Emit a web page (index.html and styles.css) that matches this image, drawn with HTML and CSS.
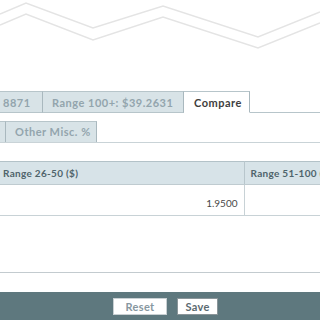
FILE: index.html
```html
<!DOCTYPE html>
<html lang="en">
<head>
    <meta charset="UTF-8">
    <link rel="stylesheet" href="styles.css">
    <title>Pricing ranges</title>
</head>
<body>
    <div class="banner">
        <svg width="320" height="60" viewBox="0 0 320 60">
            <polyline points="0,14 26,3 93,28 163,6 258,37 320,12" fill="none" stroke="#e4e4e4" stroke-width="1.5"/>
            <polyline points="0,25 26,14 93,40 163,17 258,48 320,23" fill="none" stroke="#e4e4e4" stroke-width="1.5"/>
        </svg>
    </div>

    <div class="tabs tabs-top">
        <div class="tab first">8871</div>
        <div class="tab range">Range 100+: $39.2631</div>
        <div class="tab active">Compare</div>
    </div>

    <div class="tabs tabs-second">
        <div class="tab stub"></div>
        <div class="tab misc">Other Misc. %</div>
    </div>

    <div class="grid-wrap">
        <table class="grid">
            <tr>
                <th class="col1">Range 26-50 ($)</th>
                <th>Range 51-100 ($)</th>
            </tr>
            <tr>
                <td class="col1 num">1.9500</td>
                <td></td>
            </tr>
        </table>
    </div>

    <div class="divider"></div>

    <div class="footer">
        <button class="btn reset">Reset</button>
        <button class="btn save">Save</button>
    </div>
</body>
</html>
```

FILE: styles.css
```css
*{
    box-sizing: border-box;
}

body{
    margin: 0;
    width: 320px;
    height: 320px;
    overflow: hidden;
    background-color: white;
    font-family: Lato, "Open Sans", sans-serif;
}

.banner{
    height: 91px;
}

.banner svg{
    display: block;
}

.tabs{
    display: flex;
    border-bottom: 1px solid #b7c5ca;
}

.tabs-second{
    margin-top: 8px;
    border-bottom-color: #c9d3d7;
}

.tab{
    height: 22px;
    padding: 0 10px;
    line-height: 21px;
    font-size: 11px;
    font-weight: bold;
    letter-spacing: 0.5px;
    color: #93a5ad;
    background-color: #d8e3e7;
    border-top: 1px solid #b7c5ca;
    border-right: 1px solid #a9b8be;
    margin-bottom: -1px;
    border-bottom: 1px solid #b7c5ca;
    white-space: nowrap;
    flex-shrink: 0;
}

.tabs-second .tab{
    height: 21px;
    line-height: 20px;
    border-bottom: 0;
    margin-bottom: 0;
}

.tab.first{
    padding-left: 3px;
    width: 43px;
}

.tab.range{
    width: 141px;
    padding: 0 0 0 9px;
}

.tab.stub{
    width: 6px;
    padding: 0;
}

.tab.misc{
    width: 91px;
    padding: 0 0 0 9px;
}

.tab.active{
    background-color: white;
    color: #3e3e3e;
    border-bottom-color: white;
    width: 66px;
    padding: 0 0 0 10px;
}

.grid-wrap{
    margin-top: 18px;
    overflow: hidden;
}

.grid{
    border-collapse: collapse;
    width: 420px;
    table-layout: fixed;
}

.grid th,
.grid td{
    padding: 0 6px 0 3px;
    white-space: nowrap;
    overflow: hidden;
}

.grid th{
    height: 23px;
    background-color: #d7e3e8;
    border-top: 1px solid #b3c2c8;
    border-bottom: 1px solid #bfcbd0;
    border-right: 1px solid #b8c6cc;
    text-align: left;
    font-size: 10px;
    font-weight: bold;
    letter-spacing: 0.3px;
    color: #4f646b;
}

.grid th + th{
    padding-left: 6px;
}

.grid .col1{
    width: 244px;
}

.grid td{
    height: 31px;
    border-bottom: 1px solid #c8d2d6;
    border-right: 1px solid #c8d2d6;
    font-size: 10px;
    color: #484848;
    padding-top: 5px;
}

.grid td.num{
    text-align: right;
}

.divider{
    margin-top: 56px;
    border-top: 1px solid #c3cbcf;
}

.footer{
    margin-top: 19px;
    height: 28px;
    background-color: #5e787e;
    display: flex;
    justify-content: center;
    align-items: center;
    gap: 10px;
    padding-left: 11px;
}

.btn{
    height: 17px;
    padding: 0;
    background-color: white;
    border: 1px solid #c9d0d3;
    font-family: Lato, sans-serif;
    font-size: 11px;
    font-weight: bold;
    letter-spacing: 0.3px;
    line-height: 15px;
}

.btn.reset{
    width: 54px;
    color: #8797a0;
}

.btn.save{
    width: 41px;
    color: #5b6a70;
    border-color: #8a9599;
}
```
